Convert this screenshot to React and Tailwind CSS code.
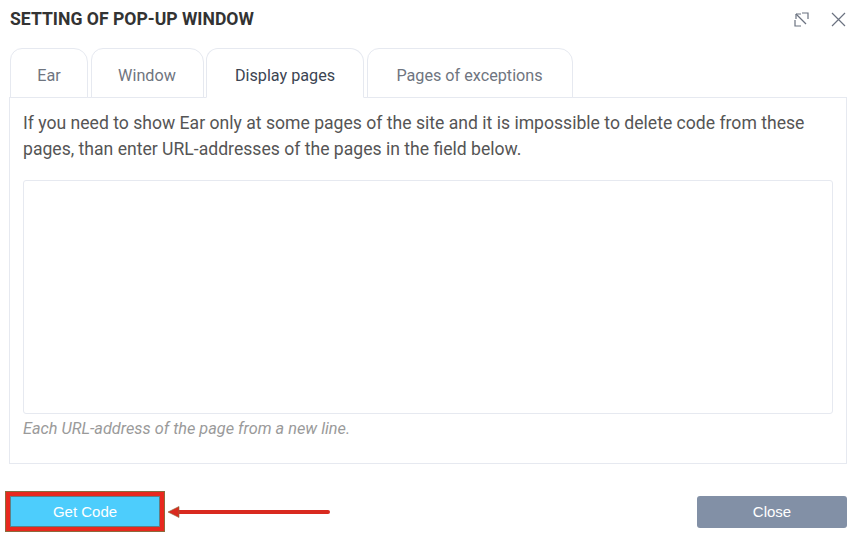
import { useState } from 'react'

const tabs = [
    { id: 'ear', label: 'Ear', w: 'w-[78px]' },
    { id: 'window', label: 'Window', w: 'w-[113px]' },
    { id: 'display', label: 'Display pages', w: 'w-[158px]' },
    { id: 'exceptions', label: 'Pages of exceptions', w: 'w-[206px]' },
]

function MaximizeIcon() {
    return (
        <svg width="15" height="15" viewBox="0 0 15 15" fill="none" stroke="#6b7280" strokeWidth="1.2">
            <path d="M1 8v6h6" />
            <path d="M8 1h6v6" />
            <path d="M2 2l10 10" />
            <path d="M2 2h5M2 2v5" />
        </svg>
    )
}

function CloseIcon() {
    return (
        <svg width="15" height="15" viewBox="0 0 15 15" fill="none" stroke="#6b7280" strokeWidth="1.2">
            <path d="M1 1l13 13M14 1L1 14" />
        </svg>
    )
}

export default function App() {
    const [activeTab, setActiveTab] = useState('display')
    const [urls, setUrls] = useState('')

    return (
        <div className="w-[852px] h-[538px] bg-white overflow-hidden" style={{ fontFamily: 'Roboto, "Liberation Sans", sans-serif' }}>
            <div className="h-[38px] flex items-center justify-between pl-[10px] pr-[6px]">
                <h1 className="text-[17.6px] font-bold text-[#333]">SETTING OF POP-UP WINDOW</h1>
                <div className="flex items-center gap-[22px]">
                    <button><MaximizeIcon /></button>
                    <button><CloseIcon /></button>
                </div>
            </div>

            <div className="pl-[9px] pr-[5px] pt-[10px]">
                <div className="flex gap-[2.5px] pl-[1px] relative z-10">
                    {tabs.map(tab => (
                        <button
                            key={tab.id}
                            onClick={() => setActiveTab(tab.id)}
                            className={`${tab.w} h-[50px] -mb-[1px] pt-[7px] text-[16.2px] border border-[#e6e9f0] rounded-tl-[12px] rounded-tr-[14px] bg-white ${
                                activeTab === tab.id ? 'border-b-white text-[#3b4452]' : 'text-[#6f7580]'
                            }`}
                        >
                            {tab.label}
                        </button>
                    ))}
                </div>

                <div className="border border-[#e6e9f0] h-[367px] px-[13px] pt-[12px]">
                    <p className="text-[17.6px] leading-[26px] text-[#555]">
                        If you need to show Ear only at some pages of the site and it is impossible to delete code from these pages, than enter URL-addresses of the pages in the field below.
                    </p>
                    <textarea
                        value={urls}
                        onChange={(e) => setUrls(e.target.value)}
                        className="mt-[18px] w-full h-[234px] border border-[#e6e9f0] rounded-[3px] resize-none outline-none p-2 text-[14px] block"
                    />
                    <p className="mt-[3px] text-[16.3px] italic text-[#9a9a9a]">Each URL-address of the page from a new line.</p>
                </div>
            </div>

            <div className="flex items-center justify-between px-[5px] mt-[27px]" style={{ fontFamily: '"Liberation Sans", Arial, sans-serif' }}>
                <div className="flex items-center">
                    <div className="bg-[#e8281e] border border-[#8c6b3c] p-[4px]">
                        <button className="w-[150px] h-[31px] bg-[#4dcdfc] border border-[#5f7f86] text-white text-[15px] pt-[1px]">Get Code</button>
                    </div>
                    <svg width="164" height="14" viewBox="0 0 164 14" className="ml-[1px]">
                        <path d="M12 7H162" stroke="#d92a1f" strokeWidth="4" strokeLinecap="round" />
                        <path d="M2 7L13 1.5V12.5Z" fill="#d92a1f" stroke="#8c6b3c" strokeWidth="0.6" />
                    </svg>
                </div>
                <button className="w-[150px] h-[32px] bg-[#8290a6] rounded-[3px] text-white text-[15px] pt-[1px]">Close</button>
            </div>
        </div>
    )
}
